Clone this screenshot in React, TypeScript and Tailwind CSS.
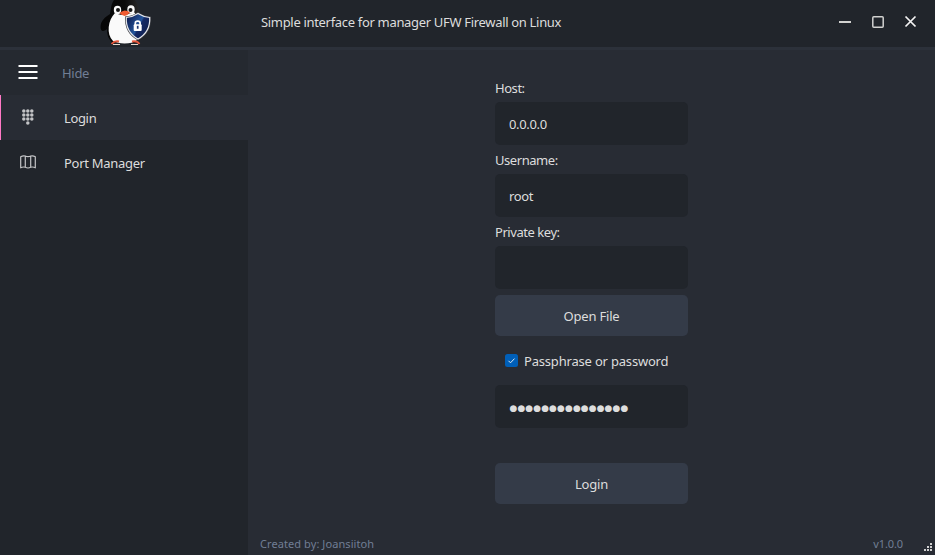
import React from "react";

function Penguin() {
  return (
    <svg width="53" height="46" viewBox="0 0 53 46" className="block">
      <defs>
        <linearGradient id="shield" x1="0" y1="0.2" x2="1" y2="0.8">
          <stop offset="0" stopColor="#0e1c50" />
          <stop offset="0.5" stopColor="#24569c" />
          <stop offset="0.56" stopColor="#142a66" />
          <stop offset="1" stopColor="#0f1c48" />
        </linearGradient>
        <linearGradient id="coat" x1="0" y1="0" x2="1" y2="0">
          <stop offset="0" stopColor="#050505" />
          <stop offset="0.6" stopColor="#0a0a0a" />
          <stop offset="1" stopColor="#2b2b2c" />
        </linearGradient>
      </defs>
      <path d="M15 0C12 4 12 9 11 14C6 17 1.500 21 1.500 27C1.500 31 4 32.500 8 29C8 36 10 40 14 43H37C42 38 43 25 40 14C40 8 39 4 36 0Z" fill="url(#coat)" />
      <path d="M16 13C9 20 7 34 14 41C20 44.500 33 44.500 38 40C42 30 41 19 35 12C30 15 21 16 16 13Z" fill="#fafafa" />
      <ellipse cx="18.500" cy="10" rx="3.700" ry="4.200" fill="#fafafa" />
      <ellipse cx="32" cy="9.500" rx="3.700" ry="4.200" fill="#fafafa" />
      <circle cx="19" cy="10" r="2" fill="#151515" />
      <circle cx="31.500" cy="10" r="2" fill="#151515" />
      <path d="M20.500 13Q22.500 11 25.500 10.500Q29 10.500 31 12.500Q29 15 25.500 16Q22 15 20.500 13Z" fill="#ef5b32" />
      <path d="M12.500 44Q15.500 40.500 20 41.500M33 41.500Q38 40.500 40.500 44" fill="none" stroke="#e8583d" strokeWidth="1.800" />
      <path d="M14 44.500H21M32 44.500H39" stroke="#e7d8cf" strokeWidth="1" />
      <path d="M39 12Q44.500 16 52 16.500Q53 33 39 40.500Q25 33 26 16.500Q33.500 16 39 12Z" fill="#3d3f45" />
      <path d="M39 13.500Q44.500 17 50.700 17.500Q51.500 32 39 39Q26.500 32 27.300 17.500Q33.500 17 39 13.500Z" fill="url(#shield)" stroke="#e6e8ec" strokeWidth="1.200" />
      <path d="M36.300 25V23Q36.300 21.200 38.700 21.200Q41.100 21.200 41.100 23V25" fill="none" stroke="#fff" strokeWidth="1.700" />
      <rect x="34.700" y="24.300" width="8" height="6.700" rx="1" fill="#fff" />
      <path d="M38.700 25.800V28.800" stroke="#1d356f" strokeWidth="1.700" />
    </svg>
  );
}

function DialPad() {
  const dots = [0, 1, 2].flatMap((r) => [0, 1, 2].map((c) => [c, r]));
  return (
    <svg width="13" height="16" viewBox="0 0 13 16" fill="#c3c4c6" className="block">
      {dots.map(([c, r]) => (
        <circle key={`${c}${r}`} cx={1.8 + c * 4} cy={2 + r * 4} r="1.750" />
      ))}
      <circle cx="5.800" cy="14" r="1.750" />
    </svg>
  );
}

function MapIcon() {
  return (
    <svg width="16" height="14" viewBox="0 0 16 14" fill="none" stroke="#c3c4c6" strokeWidth="1.200" strokeLinejoin="round" className="block">
      <path d="M.7 1.800Q3 .3 5.300 1Q8 2.400 10.700 1Q13 .3 15.300 1.800V12.800Q13 11.500 10.700 12.300Q8 13.700 5.300 12.300Q3 11.500 .7 12.800ZM5.300 1V12.300M10.700 1V12.300" />
    </svg>
  );
}

function Field({ label, children }: { label: string; children?: React.ReactNode }) {
  return (
    <label className="block">
      <span className="block h-[29px] pt-[6px] leading-[18px] tracking-[-0.45px]">{label}</span>
      <span className="flex h-[43px] items-center rounded-[5px] bg-[#21252b] px-3.5 pt-[2px] tracking-[-0.35px]">{children}</span>
    </label>
  );
}

export default function App() {
  return (
    <div className="flex h-[555px] w-[935px] flex-col overflow-hidden bg-[#282c34] font-['Noto_Sans',sans-serif] text-[13px] text-[#dddddd]">
      <header className="flex h-[50px] shrink-0 border-b-[3px] border-[#2c313a] bg-[#21252b]">
        <div className="w-[261px] pl-[99px]">
          <Penguin />
        </div>
        <h1 className="pt-[13px] leading-[18px] tracking-[-0.32px]">Simple interface for manager UFW Firewall on Linux</h1>
        <div className="ml-auto flex pt-[15px] pr-[18px]">
          <svg width="78" height="14" viewBox="0 0 78 14" fill="none" stroke="#d2d2d0">
            <path d="M0 7H12" strokeWidth="2" />
            <rect x="33.800" y="1.800" width="10.400" height="10.400" rx="1" strokeWidth="1.500" />
            <path d="M66.500 1.500L76.500 11.500M76.500 1.500L66.500 11.500" stroke="#f4f4f4" strokeWidth="1.700" />
          </svg>
        </div>
      </header>
      <div className="flex min-h-0 flex-1">
        <nav className="w-[248px] shrink-0 bg-[#21252b]">
          <button className="flex h-[45px] w-full items-center bg-[#252930] pl-[18px] text-[#717e95]">
            <svg width="20" height="16" viewBox="0 0 20 16" className="-mt-px" stroke="#fff" strokeWidth="2">
              <path d="M.5 2H19.500M.5 8H19.500M.5 14H19.500" />
            </svg>
            <span className="pl-6 pt-[3px] tracking-[-0.3px]">Hide</span>
          </button>
          <button className="flex h-[45px] w-full items-center border-l border-[#ff79c6] bg-[#282c34] pl-[21px]">
            <span className="w-[42px] pb-[2px]"><DialPad /></span>
            <span className="pt-[3px] tracking-[-0.35px]">Login</span>
          </button>
          <button className="flex h-[45px] w-full items-center pl-5">
            <span className="w-11 pb-[2px]"><MapIcon /></span>
            <span className="pt-[3px] tracking-[-0.28px]">Port Manager</span>
          </button>
        </nav>
        <main className="flex flex-1 flex-col">
          <form className="ml-[247px] flex w-[193px] flex-1 flex-col pt-[23px]">
            <Field label="Host:">0.0.0.0</Field>
            <Field label="Username:">root</Field>
            <Field label="Private key:" />
            <button type="button" className="mt-1.5 h-[41px] rounded-[5px] bg-[#343b48] pt-[3px] tracking-[-0.2px]">Open File</button>
            <label className="mt-4 flex h-[18px] items-center pl-2.5">
              <svg width="13" height="13" viewBox="0 0 13 13" className="-mt-px">
                <rect width="13" height="13" rx="2.500" fill="#005fb8" />
                <path d="M3.500 6.800L5.500 8.800L9.500 4.600" fill="none" stroke="#dbe9f5" strokeWidth="1" />
              </svg>
              <span className="pl-1.5 pt-[2px] tracking-[-0.19px]">Passphrase or password</span>
            </label>
            <div className="mt-[15px] flex h-[43px] items-center rounded-[5px] bg-[#21252b] pl-[14.500px] pt-[5px] font-['DejaVu_Sans',sans-serif] text-[9px] tracking-[0.07px]">
              ●●●●●●●●●●●●●●●
            </div>
            <button type="button" className="mt-[35px] h-[41px] rounded-[5px] bg-[#343b48] pt-[3px] tracking-[-0.2px]">Login</button>
          </form>
          <footer className="flex h-[22px] shrink-0 justify-between pl-3 text-[11px] leading-[22px] text-[#717e95]">
            <span className="tracking-[0.08px]">Created by: Joansiitoh</span>
            <span className="flex tracking-[-0.1px]">
              v1.0.0
              <svg width="32" height="22" viewBox="0 0 32 22" fill="#d0d0d0">
                <path d="M27 10h2v2h-2zM24 13h2v2h-2zM27 13h2v2h-2zM21 16h2v2h-2zM24 16h2v2h-2zM27 16h2v2h-2z" />
              </svg>
            </span>
          </footer>
        </main>
      </div>
    </div>
  );
}
